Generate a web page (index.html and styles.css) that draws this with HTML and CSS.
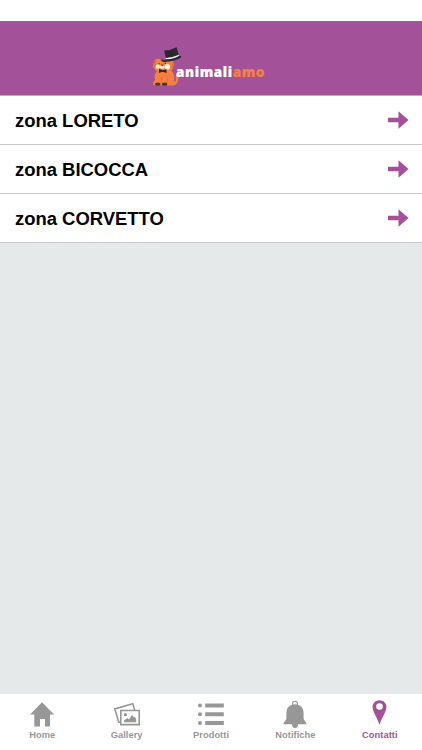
FILE: index.html
```html
<!DOCTYPE html>
<html lang="it">
<head>
<meta charset="utf-8">
<title>animaliamo</title>
<link rel="stylesheet" href="styles.css">
</head>
<body>
<div class="app">
  <header class="header">
    <div class="brand">
      <svg class="mascot" width="34" height="44" viewBox="0 0 34 44">
        <path d="M4 14C6 12 9 13 10 14C14 12 20 12 22 15C24 19 21 23 20.5 25C23.5 27 23.5 33 23 36C26 35 25 32 24.5 30C25 28 28 29 27.5 32C27 37 25 39.5 21 39.5H4C1 39.5 2 36 4 34C3 30 4 27 6 25C3 24 1 20 3.5 16Z" fill="#f5813f"/>
        <path d="M2.5 17Q3 14 5.5 13.5L4 22Q.5 20 2.5 17M21 16Q24 19 21 24Z" fill="#e96d35"/>
        <circle cx="6.8" cy="20.6" r="2.2" fill="#fff2df"/><circle cx="16.3" cy="20.8" r="2.8" fill="#fff2df"/>
        <ellipse cx="11" cy="21" rx="2.4" ry="1.7" fill="#fff2df"/>
        <path d="M10 18.7H12.5L11.2 20.4Z" fill="#3a2930"/>
        <circle cx="8" cy="17.6" r=".7" fill="#3a2930"/><circle cx="14.3" cy="17.3" r=".7" fill="#3a2930"/>
        <path d="M8 22.8L11.5 24.2L15.5 23.2V27L11.5 25.7L8 27Z" fill="#392332"/>
        <path d="M11 31Q10 34 11 38M16 32Q17 35 15 38" stroke="#dd6835" stroke-width=".7" fill="none"/>
        <ellipse cx="6.8" cy="38.2" rx="2.8" ry="1.6" fill="#56302d"/><ellipse cx="13.6" cy="38.2" rx="2.8" ry="1.6" fill="#56302d"/>
        <path d="M13.2 4.6Q20 4.2 25.6 1.2L28.4 11.4Q22 15 15.5 15Z" fill="#2b2630"/>
        <path d="M14.8 12Q21.5 11.6 27.8 8.7L28.3 10.4Q22 13.4 15.2 13.8Z" fill="#eee9eb"/>
        <path d="M10.8 13.2Q9 15.4 13 15.9Q23 15.6 29.5 12Q31.5 9.7 28.5 9.8Q20 14.6 10.8 13.2Z" fill="#2b2630"/>
      </svg>
      <span class="wordmark">animali<span class="accent">amo</span></span>
    </div>
  </header>
  <main class="content">
    <ul class="zones">
      <li class="zone">zona LORETO<svg class="arrow" width="21" height="18" viewBox="0 0 21 18"><path d="M0 6.7H10.5V.2L20.5 9L10.5 17.8V11.2H0Z"/></svg></li>
      <li class="zone">zona BICOCCA<svg class="arrow" width="21" height="18" viewBox="0 0 21 18"><path d="M0 6.7H10.5V.2L20.5 9L10.5 17.8V11.2H0Z"/></svg></li>
      <li class="zone">zona CORVETTO<svg class="arrow" width="21" height="18" viewBox="0 0 21 18"><path d="M0 6.7H10.5V.2L20.5 9L10.5 17.8V11.2H0Z"/></svg></li>
    </ul>
  </main>
  <nav class="tabs">
    <div class="tab"><svg width="28" height="30" viewBox="0 0 28 30"><path fill="currentColor" d="M14 2.3L26.2 14.5H22V26.5H17V19H12V26.5H6.3V14.5H2Z"/></svg>Home</div>
    <div class="tab"><svg width="28" height="30" viewBox="0 0 28 30"><path fill="none" stroke="currentColor" stroke-width="1.6" d="M7.8 10.5H26.2V24.6H7.8ZM7.5 22.3H5.8L1.8 8.9L19.8 3.8L21.6 10"/><circle cx="12.4" cy="14.7" r="1.6" fill="currentColor"/><path fill="currentColor" d="M11 22.3V20.5L14.3 18.1L16 19.5L19 14.7L21 17.5L22 16.7L23.2 19.5V22.3Z"/></svg>Gallery</div>
    <div class="tab"><svg width="28" height="30" viewBox="0 0 28 30"><path fill="currentColor" d="M8.2 3.5H26.8V7.5H8.2ZM8.2 12.2H26.8V16.2H8.2ZM8.2 21H26.8V25H8.2Z"/><g fill="currentColor"><circle cx="3" cy="5.5" r="2"/><circle cx="3" cy="14.2" r="2"/><circle cx="3" cy="23" r="2"/></g></svg>Prodotti</div>
    <div class="tab"><svg width="28" height="30" viewBox="0 0 28 30"><circle cx="14" cy="3.7" r="2.4" fill="none" stroke="currentColor" stroke-width="1.1"/><path fill="currentColor" d="M14 4.3C19.5 4.3 22.6 8 22.6 13V18C22.6 20.7 25.6 22 25.6 24.3H17Q17 28 14 28Q11 28 11 24.3H2.4C2.4 22 5.4 20.7 5.4 18V13C5.4 8 8.5 4.3 14 4.3Z"/></svg>Notifiche</div>
    <div class="tab active"><svg width="28" height="30" viewBox="0 0 28 30"><path fill="currentColor" fill-rule="evenodd" d="M13.5 .2C17.5 .2 20.4 3 20.4 7C20.4 12 15.9 17 13.5 24.8C11.1 17 6.6 12 6.6 7C6.6 3 9.5 .2 13.5 .2ZM13.5 3.2A3.3 3.3 0 1 0 13.5 9.8A3.3 3.3 0 1 0 13.5 3.2Z"/></svg>Contatti</div>
  </nav>
</div>
</body>
</html>
```
FILE: styles.css
```css
* { box-sizing: border-box; }
body { margin: 0; background: #fff; font-family: "Liberation Sans", Arial, sans-serif; }
.app { display: flex; flex-direction: column; height: 750px; padding-top: 21px; overflow: hidden; }
.header { height: 75px; flex: none; background: #a35299; border-bottom: 1px solid #c9a5c5; }
.brand { display: flex; padding: 25px 0 0 151px; }
.mascot { flex: none; }
.wordmark { margin: 16px 0 0 -9px; font: 800 13.5px/20px "Open Sans", sans-serif; letter-spacing: .6px; color: #fff; -webkit-text-stroke: .2px currentColor; }
.accent { color: #f5813f; }
.content { flex: 1; background: #e5e9ea; }
.zones { list-style: none; margin: 0; padding: 0; }
.zone { display: flex; align-items: center; justify-content: space-between; height: 49px; padding: 1px 13px 0 15px; background: #fff; border-bottom: 1px solid #c8c8c8; font-size: 18.45px; line-height: 22px; font-weight: 700; color: #000; }
.arrow { margin-bottom: 2px; fill: #a35299; }
.tabs { display: flex; flex: none; height: 56px; background: #fff; }
.tab { flex: 1; display: flex; flex-direction: column; align-items: center; padding-top: 6px; font-size: 9.3px; line-height: 11px; font-weight: 700; color: #979797; letter-spacing: .05px; }
.tab svg { flex: none; }
.active { color: #a35299; }
```
